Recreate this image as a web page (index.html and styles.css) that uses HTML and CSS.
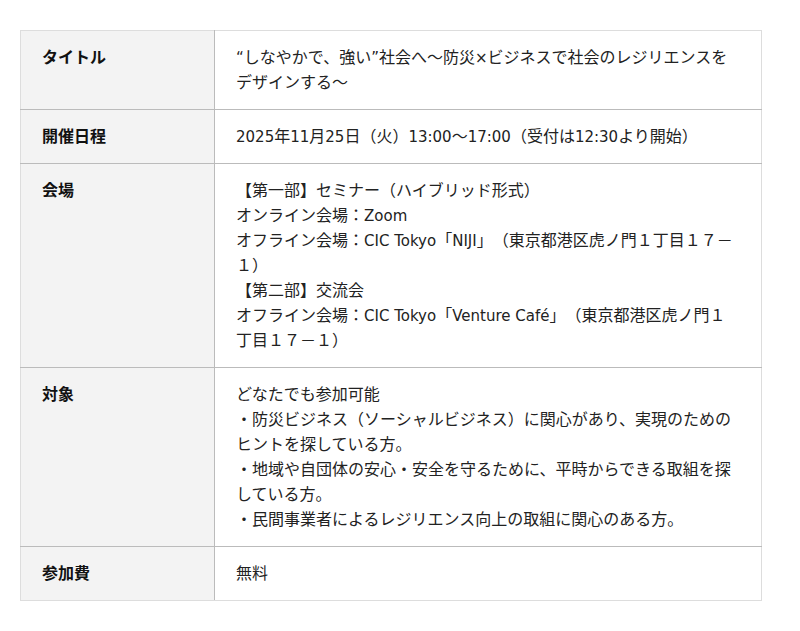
FILE: index.html
```html
<!DOCTYPE html>
<html lang="ja">
<head>
<meta charset="utf-8">
<link rel="stylesheet" href="styles.css">
</head>
<body>
<div class="wrap">
<table class="info">
<tr>
<th>タイトル</th>
<td><span class="lat">“</span>しなやかで、強い<span class="lat">”</span>社会へ～防災<span class="lat">×</span>ビジネスで社会のレジリエンスをデザインする～</td>
</tr>
<tr>
<th>開催日程</th>
<td><span class="lat">2025</span>年<span class="lat">11</span>月<span class="lat">25</span>日（火）<span class="lat">13:00</span>～<span class="lat">17:00</span>（受付は<span class="lat">12:30</span>より開始）</td>
</tr>
<tr>
<th>会場</th>
<td>【第一部】セミナー（ハイブリッド形式）<br>オンライン会場：<span class="lat">Zoom</span><br>オフライン会場：<span class="lat">CIC Tokyo</span>「<span class="lat">NIJI</span>」（東京都港区虎ノ門１丁目１７－１）<br>【第二部】交流会<br>オフライン会場：<span class="lat">CIC Tokyo</span>「<span class="lat">Venture Café</span>」（東京都港区虎ノ門１丁目１７－１）</td>
</tr>
<tr>
<th>対象</th>
<td>どなたでも参加可能<br>・防災ビジネス（ソーシャルビジネス）に関心があり、実現のためのヒントを探している方。<br>・地域や自団体の安心・安全を守るために、平時からできる取組を探している方。<br>・民間事業者によるレジリエンス向上の取組に関心のある方。</td>
</tr>
<tr>
<th>参加費</th>
<td>無料</td>
</tr>
</table>
</div>
</body>
</html>
```
FILE: styles.css
```css
html, body {
  margin: 0;
  padding: 0;
  background: #fff;
}
body {
  font-family: "Noto Sans CJK JP", sans-serif;
  font-size: 16px;
  line-height: 25px;
  color: #222;
  text-spacing-trim: space-all;
}
.lat {
  font-family: "DejaVu Sans", sans-serif;
  font-size: 15px;
  line-height: 1;
}
.wrap {
  padding: 30px 38px 0 20px;
}
.info {
  width: 742px;
  border-collapse: collapse;
  border: 1px solid #ddd;
  table-layout: fixed;
}
.info th, .info td {
  vertical-align: top;
  text-align: left;
  padding: 13px 22px 15px 21px;
  border-top: 1px solid #bbb;
  border-bottom: 1px solid #bbb;
}
.info tr:first-child th, .info tr:first-child td {
  border-top: 1px solid #ddd;
}
.info tr:last-child th, .info tr:last-child td {
  border-bottom: 1px solid #ddd;
}
.info th {
  width: 150px;
  background: #f3f3f3;
  font-weight: bold;
  color: #111;
  border-right: 1px solid #bbb;
}
.info td {
  background: #fff;
  font-weight: normal;
  padding-right: 25px;
  padding-left: 21px;
}
```
